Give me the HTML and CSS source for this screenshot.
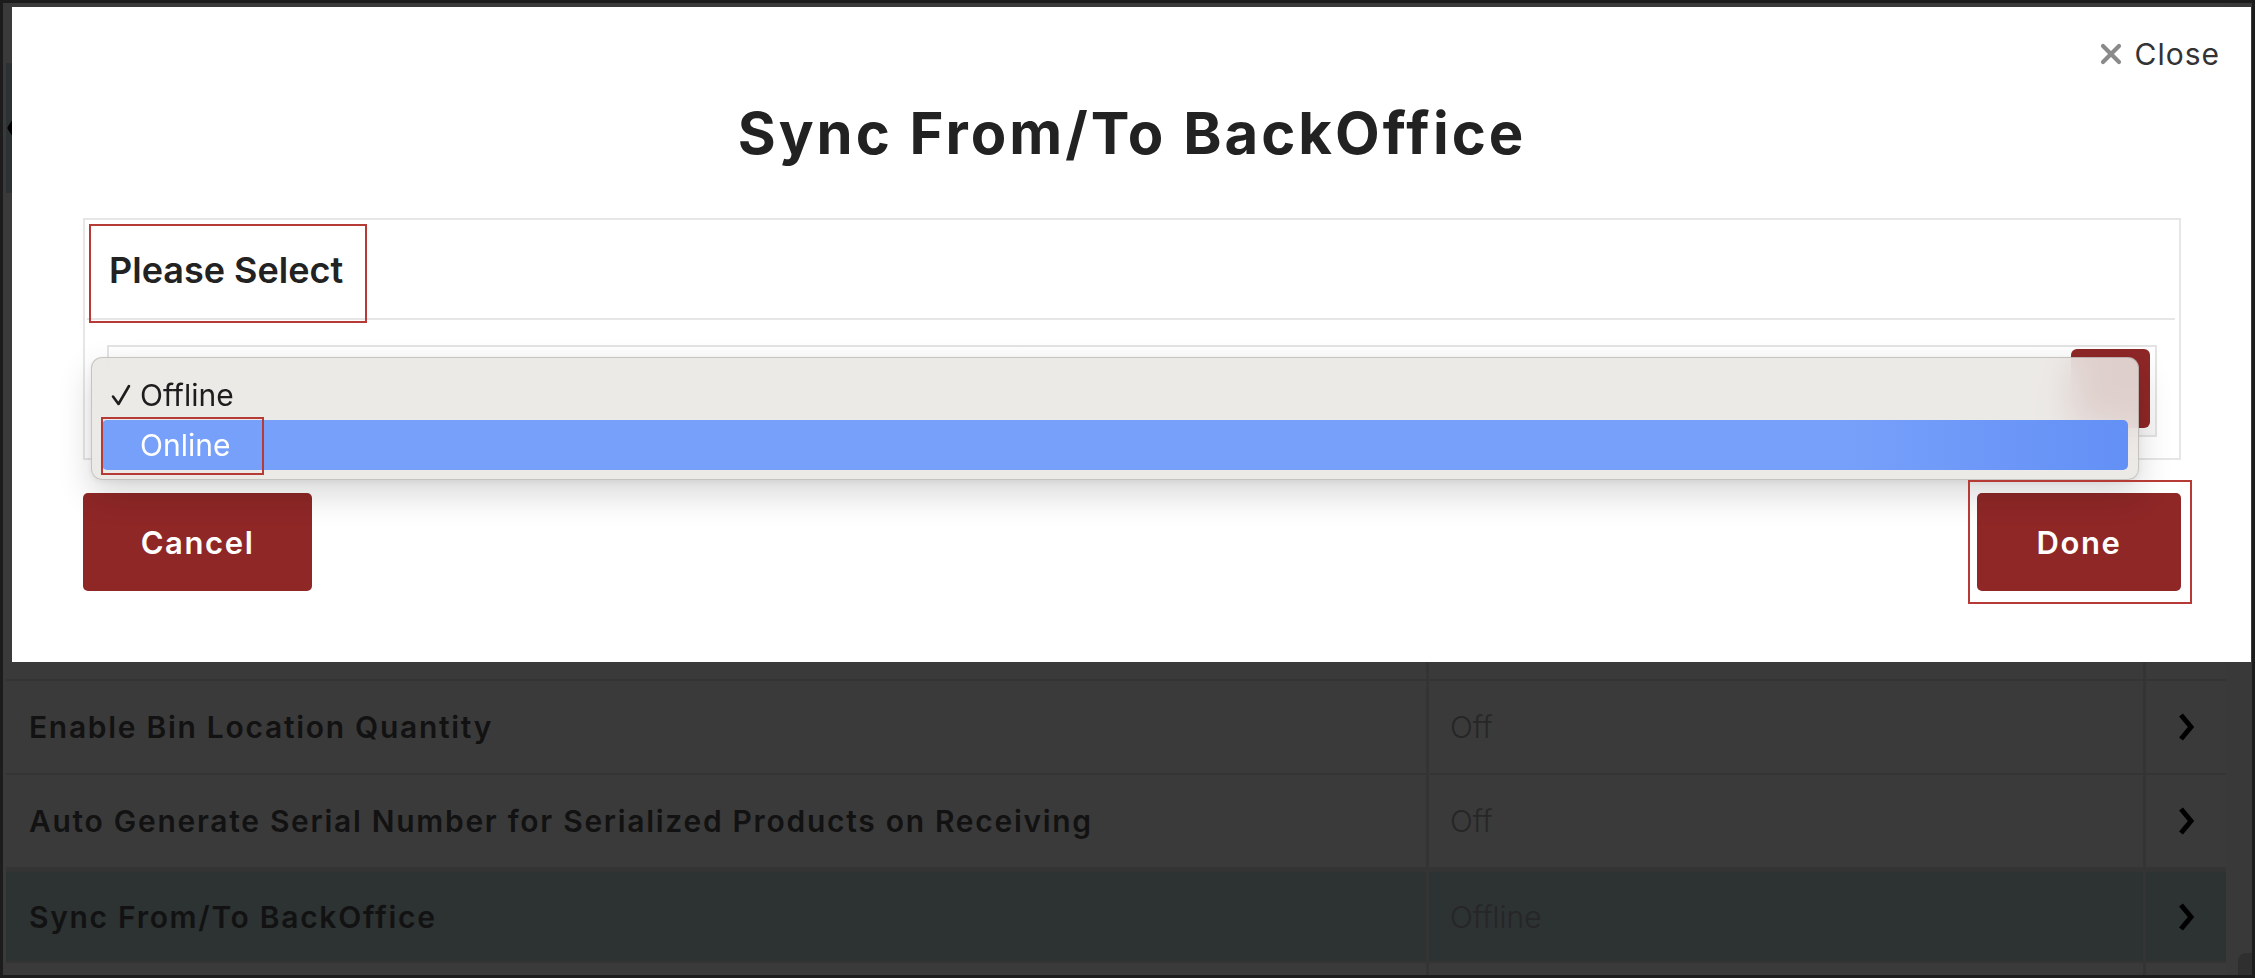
FILE: index.html
```html
<!DOCTYPE html>
<html lang="en">
<head>
<meta charset="utf-8">
<title>Sync From/To BackOffice</title>
<link rel="stylesheet" href="styles.css">
</head>
<body>
<div class="frame">
  <div class="page">
    <div class="main">
      <div class="topbar"></div>
      <div class="navrow">
        <svg class="back" width="14" height="30" viewBox="0 0 14 30"><polyline points="11,3 3,15 11,27" fill="none" stroke="#000" stroke-width="5" stroke-linejoin="round"/></svg>
      </div>
      <div class="spacer"></div>
      <div class="list">
        <div class="row">
          <div class="cell label"></div>
          <div class="cell value"></div>
          <div class="cell chev"></div>
        </div>
        <div class="row">
          <div class="cell label">Enable Bin Location Quantity</div>
          <div class="cell value">Off</div>
          <div class="cell chev"><svg width="18" height="32" viewBox="0 0 18 32"><polyline points="4,4 14,16 4,28" fill="none" stroke="#000" stroke-width="5"/></svg></div>
        </div>
        <div class="row">
          <div class="cell label">Auto Generate Serial Number for Serialized Products on Receiving</div>
          <div class="cell value">Off</div>
          <div class="cell chev"><svg width="18" height="32" viewBox="0 0 18 32"><polyline points="4,4 14,16 4,28" fill="none" stroke="#000" stroke-width="5"/></svg></div>
        </div>
        <div class="row current">
          <div class="cell label">Sync From/To BackOffice</div>
          <div class="cell value">Offline</div>
          <div class="cell chev"><svg width="18" height="32" viewBox="0 0 18 32"><polyline points="4,4 14,16 4,28" fill="none" stroke="#000" stroke-width="5"/></svg></div>
        </div>
        <div class="row">
          <div class="cell label"></div>
          <div class="cell value"></div>
          <div class="cell chev"></div>
        </div>
      </div>
    </div>
    <div class="gutter"><div class="thumb"></div></div>
  </div>

  <div class="modal">
    <button class="close">
      <svg class="x" width="24" height="24" viewBox="0 0 24 24"><path d="M4 4 L20 20 M20 4 L4 20" stroke="#8a8a8a" stroke-width="4.2" stroke-linecap="round"/></svg>
      <span>Close</span>
    </button>
    <h1 class="title">Sync From/To BackOffice</h1>
    <div class="panel">
      <div class="panel-heading">Please Select</div>
      <div class="panel-body">
        <div class="select">
          <span class="select-btn"></span>
          <div class="popup">
            <div class="opt"><span class="check"><svg width="20" height="22" viewBox="0 0 20 22"><path d="M2 12.5 L7.5 20 L18 2" fill="none" stroke="#1d1d1d" stroke-width="2.6" stroke-linecap="round" stroke-linejoin="round"/></svg></span><span>Offline</span></div>
            <div class="opt active"><span class="check"></span><span>Online</span></div>
          </div>
        </div>
      </div>
    </div>
    <div class="actions">
      <button class="btn cancel">Cancel</button>
      <button class="btn done">Done</button>
    </div>
    <div class="annot annot-heading"></div>
    <div class="annot annot-online"></div>
    <div class="annot annot-done"></div>
  </div>
</div>
</body>
</html>
```
FILE: styles.css
```css
* { box-sizing: border-box; }
html, body { margin: 0; padding: 0; background: #1c1c1c; }
body { font-family: "Inter", "Open Sans", sans-serif; }

.frame {
  position: relative;
  width: 2255px;
  height: 978px;
  border: 3px solid #1c1c1c;
  background: #3a3a3a;
  overflow: hidden;
}

.page { display: flex; height: 100%; }
.main {
  flex: 1; display: flex; flex-direction: column;
  padding-left: 3px; overflow: hidden;
}
.main > * { flex-shrink: 0; }
.gutter { width: 26px; background: #393939; position: relative; flex-shrink: 0; }
.thumb {
  position: absolute; left: 12px; right: 0; top: 950px; height: 60px;
  background: #2f2f2f; border-radius: 8px 0 0 8px;
}

.topbar { height: 60px; background: #3a3a3a; }
.navrow {
  height: 130px; background: #2c3233;
  display: flex; align-items: center; padding-left: 1px;
}
.spacer { height: 394px; background: #3a3a3a; }

.list { display: flex; flex-direction: column; gap: 2px; background: #343434; }
.row {
  display: grid;
  grid-template-columns: 1420px 714px 80px;
  column-gap: 3px;
  height: 92px;
  flex-shrink: 0;
}
.row.current { height: 89px; margin-top: 3px; }
.cell {
  background: #3a3a3a;
  display: flex; align-items: center;
  font-size: 30px;
  white-space: nowrap;
}
.row.current .cell { background: #2d3233; }
.cell.label { padding-left: 23px; font-weight: 600; color: #121212; letter-spacing: 1.7px; }
.cell.value { padding-left: 21px; font-weight: 300; color: #262626; }
.cell.chev { justify-content: center; }

/* modal */
.modal {
  position: absolute;
  left: 9px; top: 4px;
  width: 2239px; height: 655px;
  background: #fff;
  padding: 97px 70px 71px 71px;
  z-index: 5;
}
.close {
  position: absolute; top: 33px; right: 31px;
  display: flex; align-items: center; gap: 12px;
  background: none; border: 0; padding: 0; margin: 0;
  font-family: "Inter", sans-serif; font-size: 30px; line-height: 28px;
  font-weight: 400; letter-spacing: 1px;
  color: #333;
}
.close .x { display: block; }

.title {
  margin: 0 0 56px 0;
  height: 58px;
  text-align: center;
  font-size: 58px; line-height: 58px;
  font-weight: 700; color: #222;
  letter-spacing: 3px;
}

.panel { border: 2px solid #e6e6e6; height: 242px; }
.panel-heading {
  margin: 0 4px 0 2px;
  padding: 32px 0 30px 22px;
  font-size: 36px; line-height: 36px; font-weight: 600; color: #222;
  border-bottom: 2px solid #e6e6e6;
}
.panel-body { padding: 25px 22px 0 22px; }

.select {
  position: relative;
  height: 92px;
  border: 2px solid #e3e3e3;
  background: linear-gradient(#ffffff, #f6f6f6);
  display: flex; justify-content: flex-end; align-items: flex-start;
  padding: 2px 5px;
}
.select-btn { width: 79px; height: 79px; background: #8f2727; border-radius: 6px; }

.popup {
  position: absolute;
  left: -18px; top: 10px;
  width: 2048px; height: 123px;
  padding: 12px 10px 9px 10px;
  border: 1px solid rgba(0,0,0,0.16);
  border-radius: 11px;
  background: rgba(233,231,228,0.88);
  -webkit-backdrop-filter: blur(18px);
  backdrop-filter: blur(18px);
  box-shadow: 0 14px 34px rgba(0,0,0,0.16), 0 2px 6px rgba(0,0,0,0.06);
  font-family: "Inter", "Roboto", sans-serif;
}
.opt {
  display: flex; align-items: center;
  height: 50px; padding-left: 9px;
  font-size: 30px; line-height: 50px; color: #1d1d1d;
  border-radius: 5px;
}
.opt .check { width: 29px; height: 22px; display: flex; align-items: center; }
.opt .check svg { display: block; }
.opt.active {
  color: #fff;
  background: linear-gradient(90deg, #77a0fa 0%, #77a0fa 86%, #6390f6 100%);
}

.actions {
  margin-top: 33px;
  display: flex; justify-content: space-between;
}
.btn {
  height: 98px;
  background: #8f2727; color: #fff;
  border: 0; border-radius: 5px;
  font-family: "Inter", sans-serif; font-size: 31px; font-weight: 600;
  letter-spacing: 1.6px;
  padding: 0;
}
.btn.cancel { width: 229px; }
.btn.done { width: 204px; }

.annot { position: absolute; border: 2px solid #b63b37; z-index: 10; pointer-events: none; }
.annot-heading { left: 77px; top: 217px; width: 278px; height: 99px; }
.annot-online { left: 89px; top: 410px; width: 163px; height: 58px; }
.annot-done { left: 1956px; top: 473px; width: 224px; height: 124px; }
```
